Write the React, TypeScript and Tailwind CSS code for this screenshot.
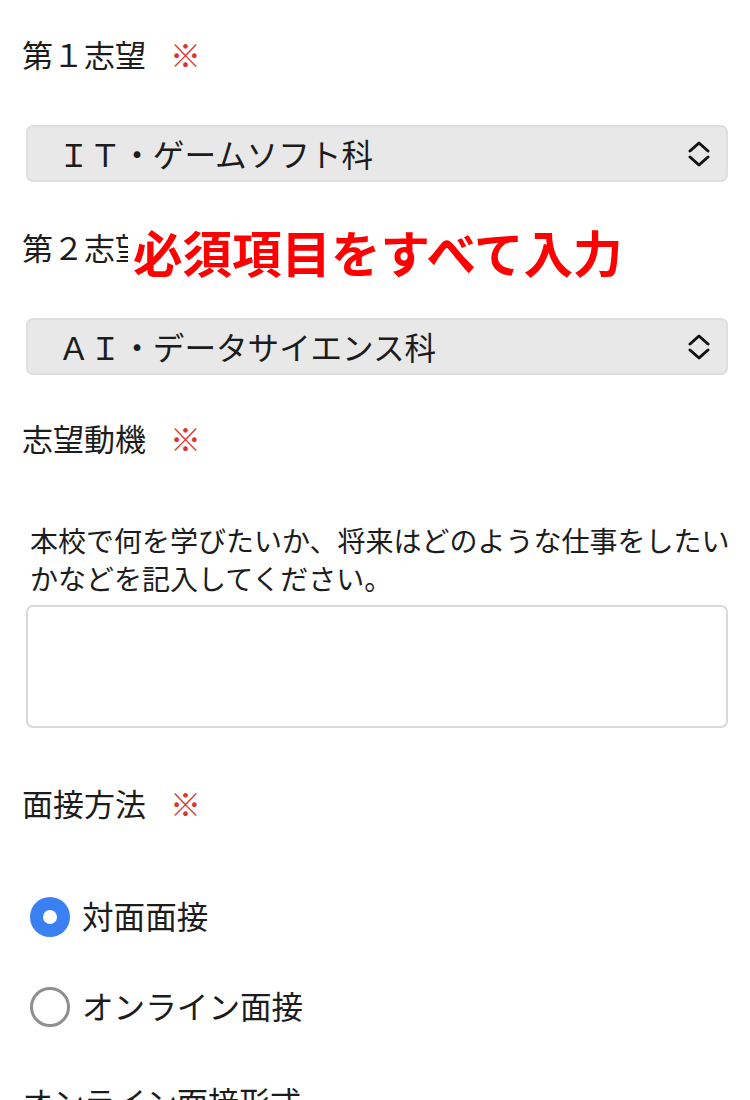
import React, { useState } from 'react'

const font = { fontFamily: '"Noto Sans CJK JP", "Noto Sans", sans-serif' }

const Required = () => <span className="ml-[24px] text-[#d8392f]">※</span>

const Label = ({ children, required = true }: { children: React.ReactNode; required?: boolean }) => (
  <div className="relative top-[-3px] flex items-center h-[40px] text-[31px] leading-[40px] text-[#1c1c1c]">
    <span>{children}</span>
    {required && <Required />}
  </div>
)

const Chevrons = () => (
  <svg width="24" height="26" viewBox="0 0 24 26" fill="none" stroke="#111" strokeWidth="3" strokeLinecap="round" strokeLinejoin="round">
    <path d="M3 10 L12 2 L21 10" />
    <path d="M3 16 L12 24 L21 16" />
  </svg>
)

const SelectBox = ({ value }: { value: string }) => (
  <div className="ml-[4px] flex items-center justify-between h-[57px] pl-[30px] pr-[15px] rounded-[7px] bg-[#e8e8e8] border-2 border-[#dedede] text-[31.6px] text-[#1c1c1c]">
    <span className="leading-none">{value}</span>
    <Chevrons />
  </div>
)

const Radio = ({ checked, label, onClick }: { checked: boolean; label: string; onClick: () => void }) => (
  <button onClick={onClick} className="ml-[8px] flex items-center gap-[12px] h-[40px] text-left">
    {checked ? (
      <span className="flex items-center justify-center w-[40px] h-[40px] rounded-full bg-[#3b80f2]">
        <span className="w-[14px] h-[14px] rounded-full bg-white" />
      </span>
    ) : (
      <span className="w-[40px] h-[40px] rounded-full border-[3px] border-[#8f8f8f] bg-white" />
    )}
    <span className="relative top-[-2px] text-[31.6px] leading-[40px] text-[#1c1c1c]">{label}</span>
  </button>
)

export default function App() {
  const [method, setMethod] = useState('face')

  return (
    <div style={font} className="w-[750px] h-[1100px] overflow-hidden bg-white px-[22px]">
      {/* 第１志望 */}
      <div className="pt-[37px]">
        <Label>第１志望</Label>
      </div>
      <div className="mt-[48px]">
        <SelectBox value="ＩＴ・ゲームソフト科" />
      </div>

      {/* 第２志望 + overlay message */}
      <div className="relative mt-[48px]">
        <Label>第２志望</Label>
        <div className="absolute left-[106px] top-[-4px] pl-[5px] pr-[6px] bg-white text-[49.5px] leading-[52px] font-bold text-[#ff0000] whitespace-nowrap">
          必須項目をすべて入力
        </div>
      </div>
      <div className="mt-[48px]">
        <SelectBox value="ＡＩ・データサイエンス科" />
      </div>

      {/* 志望動機 */}
      <div className="mt-[46px]">
        <Label>志望動機</Label>
      </div>
      <p className="mt-[60px] ml-[8px] mr-[-14px] text-[28px] leading-[38px] text-[#1c1c1c]">
        本校で何を学びたいか、将来はどのような仕事をしたいかなどを記入してください。
      </p>
      <textarea className="block mt-[8px] ml-[4px] w-[702px] h-[123px] rounded-[7px] border-2 border-[#d9d9d9] resize-none outline-none p-3 text-[28px]" />

      {/* 面接方法 */}
      <div className="mt-[58px]">
        <Label>面接方法</Label>
      </div>
      <div className="mt-[71px] flex flex-col gap-[50px]">
        <Radio checked={method === 'face'} label="対面面接" onClick={() => setMethod('face')} />
        <Radio checked={method === 'online'} label="オンライン面接" onClick={() => setMethod('online')} />
      </div>

      <div className="mt-[57px]">
        <Label required={false}>オンライン面接形式</Label>
      </div>
    </div>
  )
}
